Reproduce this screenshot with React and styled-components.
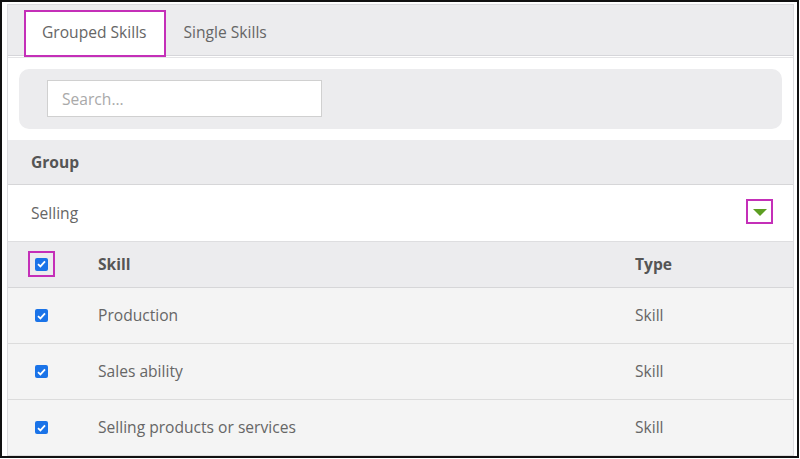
import React from "react";
import styled, { createGlobalStyle } from "styled-components";

const Global = createGlobalStyle`
  html, body { margin: 0; padding: 0; background: #fff; }
  body { font-family: "Open Sans", "Liberation Sans", sans-serif; }
  * { box-sizing: border-box; }
`;

const Frame = styled.div`
  width: 799px;
  height: 458px;
  border: 2px solid #111;
  background: #fff;
  padding: 2px 3px 0 5px;
  overflow: hidden;
`;

const Panel = styled.div`
  border: 1px solid #dcdcdf;
  border-bottom: none;
  background: #fff;
  height: 460px;
`;

const TabBar = styled.div`
  display: flex;
  align-items: flex-start;
  height: 51px;
  background: #ececee;
  border-bottom: 1px solid #d6d6da;
  box-shadow: 0 1px 0 #fff, 0 2px 0 #e4e4e6;
  padding: 5px 0 0 16px;
`;

const Tab = styled.div`
  height: 47px;
  display: flex;
  align-items: center;
  padding: 0 17px 3px 16px;
  font-size: 15.6px;
  color: #666;
  background: ${(p) => (p.$active ? "#fff" : "transparent")};
  border: 2px solid ${(p) => (p.$active ? "#c42fb8" : "transparent")};
  position: relative;
  z-index: 1;
`;

const SearchArea = styled.div`
  padding: 13px 11px 11px 11px;
`;

const SearchPanel = styled.div`
  height: 60px;
  background: #ececee;
  border-radius: 10px;
  padding: 11px 28px;
`;

const SearchInput = styled.input`
  width: 275px;
  height: 37px;
  border: 1px solid #d0d0d0;
  background: #fff;
  padding: 0 14px;
  font-family: "Open Sans", "Liberation Sans", sans-serif;
  font-size: 15.6px;
  color: #666;
  outline: none;
  &::placeholder { color: #a9a9a9; }
`;

const HeaderRow = styled.div`
  height: ${(p) => p.$h || 45}px;
  background: #ececee;
  border-bottom: 1px solid #d6d6d8;
  display: ${(p) => (p.$grid ? "grid" : "flex")};
  grid-template-columns: 70px 537px 1fr;
  align-items: center;
  padding-left: ${(p) => (p.$grid ? 20 : 23)}px;
  padding-bottom: 1px;
  font-weight: 700;
  font-size: 15.6px;
  color: #555;
`;

const GroupRow = styled.div`
  height: 57px;
  background: #fff;
  border-bottom: 1px solid #dedee0;
  display: flex;
  align-items: center;
  justify-content: space-between;
  padding: 0 20px 0 23px;
  font-size: 15.6px;
  color: #666;
`;

const DropBox = styled.div`
  width: 27px;
  height: 25px;
  border: 2px solid #c42fb8;
  display: flex;
  align-items: center;
  justify-content: center;
  margin-top: -4px;
`;

const Triangle = styled.div`
  width: 0;
  height: 0;
  border-left: 7px solid transparent;
  border-right: 7px solid transparent;
  border-top: 7px solid #5c9e22;
  margin-top: 2px;
`;

const Row = styled.div`
  height: 56px;
  background: #f4f4f4;
  border-bottom: 1px solid #dcdcdc;
  display: grid;
  grid-template-columns: 70px 537px 1fr;
  align-items: center;
  padding-left: 20px;
  font-size: 15.6px;
  color: #666;
`;

const Cell = styled.span`
  margin-top: -2px;
`;

const CheckWrap = styled.div`
  width: 27px;
  height: 26px;
  border: 2px solid ${(p) => (p.$outlined ? "#c42fb8" : "transparent")};
  display: flex;
  align-items: center;
  justify-content: center;
`;

const Check = styled.span`
  width: 13px;
  height: 13px;
  border-radius: 2px;
  background: #1a73e8;
  display: flex;
  align-items: center;
  justify-content: center;
`;

function CheckBox({ outlined }) {
  return (
    <CheckWrap $outlined={outlined}>
      <Check>
        <svg width="9" height="8" viewBox="0 0 9 8">
          <path d="M1 4.2 L3.4 6.4 L8 1.4" fill="none" stroke="#fff" strokeWidth="1.8" />
        </svg>
      </Check>
    </CheckWrap>
  );
}

const rows = ["Production", "Sales ability", "Selling products or services"];

export default function App() {
  return (
    <>
      <Global />
      <Frame>
        <Panel>
          <TabBar>
            <Tab $active>Grouped Skills</Tab>
            <Tab>Single Skills</Tab>
          </TabBar>
          <SearchArea>
            <SearchPanel>
              <SearchInput placeholder="Search..." />
            </SearchPanel>
          </SearchArea>
          <HeaderRow $h={45}>Group</HeaderRow>
          <GroupRow>
            <span>Selling</span>
            <DropBox>
              <Triangle />
            </DropBox>
          </GroupRow>
          <HeaderRow $grid $h={46}>
            <CheckBox outlined />
            <span>Skill</span>
            <span>Type</span>
          </HeaderRow>
          {rows.map((r) => (
            <Row key={r}>
              <CheckBox />
              <Cell>{r}</Cell>
              <Cell>Skill</Cell>
            </Row>
          ))}
        </Panel>
      </Frame>
    </>
  );
}
